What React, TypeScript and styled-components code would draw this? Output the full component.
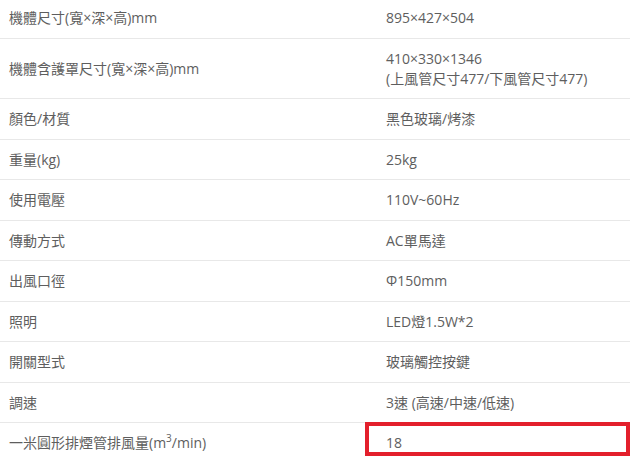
import React from "react";
import styled, { createGlobalStyle } from "styled-components";

const Global = createGlobalStyle`
  html, body { margin: 0; padding: 0; background: #fff; }
  body { font-family: "Open Sans", "Noto Sans CJK TC", sans-serif; }
`;

const Table = styled.div`
  width: 630px;
  margin-top: -2px;
  display: flex;
  flex-direction: column;
  color: #5e5e5e;
  font-size: 14px;
  line-height: 20px;
`;

const Row = styled.div`
  display: grid;
  grid-template-columns: 365px 1fr;
  align-items: center;
  border-bottom: 1px solid #e8e8e8;
`;

const Label = styled.div`
  padding: 10px 0 9.5px 9px;
`;

const Value = styled.div`
  padding: 10px 0 9.5px 21px;
`;

const Sup = styled.sup`
  font-size: 10px;
  line-height: 0;
  vertical-align: 6px;
`;

const HighlightCell = styled.div`
  align-self: start;
`;

const Highlight = styled.div`
  margin-top: -1px;
  height: 34px;
  box-sizing: border-box;
  border: 4px solid #e3202c;
  padding: 6px 0 0 17px;
  line-height: 22px;
`;

const rows: [React.ReactNode, React.ReactNode][] = [
  ["機體尺寸(寬×深×高)mm", "895×427×504"],
  [
    "機體含護罩尺寸(寬×深×高)mm",
    <>
      410×330×1346
      <br />
      (上風管尺寸477/下風管尺寸477)
    </>,
  ],
  ["顏色/材質", "黑色玻璃/烤漆"],
  ["重量(kg)", "25kg"],
  ["使用電壓", "110V~60Hz"],
  ["傳動方式", "AC單馬達"],
  ["出風口徑", "Φ150mm"],
  ["照明", "LED燈1.5W*2"],
  ["開關型式", "玻璃觸控按鍵"],
  ["調速", "3速 (高速/中速/低速)"],
];

export default function App() {
  return (
    <>
      <Global />
      <Table>
        {rows.map(([l, v], i) => (
          <Row key={i}>
            <Label>{l}</Label>
            <Value>{v}</Value>
          </Row>
        ))}
        <Row>
          <Label>
            一米圓形排煙管排風量(m<Sup>3</Sup>/min)
          </Label>
          <HighlightCell>
            <Highlight>18</Highlight>
          </HighlightCell>
        </Row>
      </Table>
    </>
  );
}
